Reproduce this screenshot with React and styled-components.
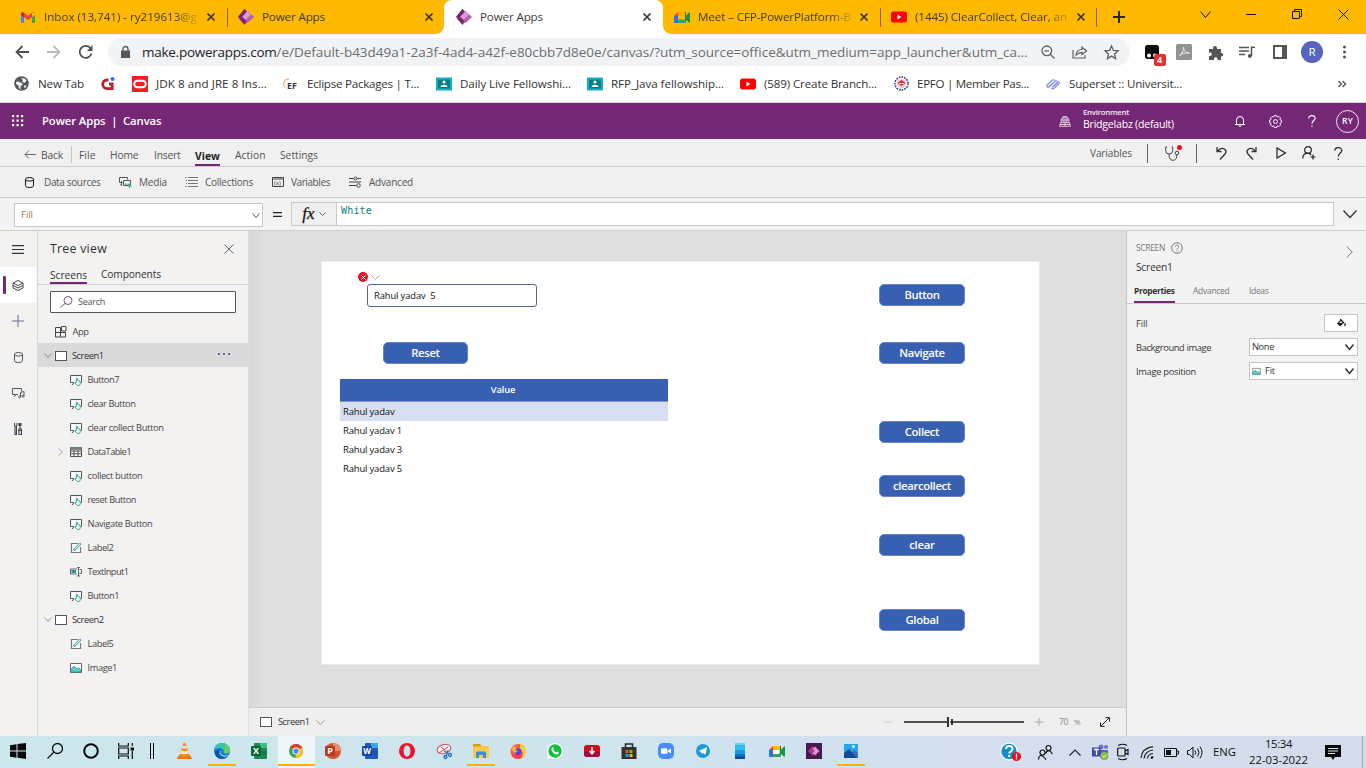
import React, { useLayoutEffect, useRef, useState } from "react";
import styled, { createGlobalStyle } from "styled-components";

const GlobalStyle = createGlobalStyle`
  * { box-sizing: border-box; }
  body { margin: 0; overflow: hidden; font-family: "Open Sans", "Noto Sans", sans-serif; }
  svg { display: block; flex: none; overflow: visible; }
`;

/* ---------- text ---------- */
const TextSpan = styled.span`
  display: inline-block;
  flex: none;
  white-space: pre;
  font-size: ${(p) => p.$size || 9.5}px;
  font-weight: ${(p) => p.$weight || 400};
  color: ${(p) => p.$color || "#333"};
  line-height: ${(p) => p.$lh || 14}px;
`;

/* Tracks its letters so that the label takes exactly `w` pixels. */
function Text({ w, size, weight, color, lh, children }) {
  const ref = useRef(null);
  const [spacing, setSpacing] = useState(0);
  useLayoutEffect(() => {
    if (!w) return;
    const natural = ref.current.getBoundingClientRect().width;
    setSpacing((w - natural) / ref.current.textContent.length);
  }, [w]);
  return (
    <TextSpan ref={ref} $size={size} $weight={weight} $color={color} $lh={lh} style={{ letterSpacing: spacing }}>
      {children}
    </TextSpan>
  );
}

/* ---------- icons ---------- */
function Icon({ s = 16, w, h, vb, c = "#333", sw = 1, children }) {
  return (
    <svg width={w || s} height={h || s} viewBox={vb || `0 0 ${w || s} ${h || s}`} fill="none" stroke={c} strokeWidth={sw}>
      {children}
    </svg>
  );
}
const GmailIcon = () => (
  <Icon w={14} h={11} c="none">
    <path d="M0 2h3v9H1a1 1 0 0 1-1-1z" fill="#4285f4" />
    <path d="M11 2h3v8a1 1 0 0 1-1 1h-2z" fill="#34a853" />
    <path d="M0 1.500C0 0 1.500-.3 3 .8l4 3 4-3C12.500-.3 14 0 14 1.500V3l-7 5-7-5z" fill="#ea4335" />
    <path d="M0 1.500C0 .3 1.500 0 3 1v4L0 3z" fill="#c5221f" />
    <path d="M14 1.500C14 .3 12.500 0 11 1v4l3-2z" fill="#fbbc04" />
  </Icon>
);
const PowerIcon = () => (
  <Icon s={16} c="none">
    <path d="M6.500 0L0 8l6.500 8L13 8z" fill="#8c2f88" />
    <path d="M6.500 0L0 8h5l5-4z" fill="#742774" />
    <path d="M9.500 2l6.500 6-6.500 6-3.500-6z" fill="#b560ae" />
    <path d="M9.500 2L13 5.500 7.500 11 4 8z" fill="#dc9ad3" />
    <path d="M4 8l3.500 3-2 3.500L1 9.500z" fill="#742774" />
  </Icon>
);
const MeetIcon = ({ pale }) => (
  <Icon s={16} c="none">
    <path d="M0 7l4-4v4z" fill="#ea4335" />
    <path d="M4 3h7v4H4z" fill={pale ? "#fbbc04" : "#f9ab00"} />
    <path d="M0 7h4v7H1a1 1 0 0 1-1-1z" fill="#2874f0" />
    <path d="M4 10.500h8V13a1 1 0 0 1-1 1H4z" fill="#34a853" />
    <path d="M11 3h1v10l-1-2z" fill="#188038" />
    <path d="M11 8l4-4.500h1v10h-1l-4-3.500z" fill="#159447" />
    {pale && <path d="M4 7h6v4H4z" fill="#fff" />}
  </Icon>
);
const YoutubeIcon = () => (
  <Icon w={16} h={12} c="none">
    <rect y=".5" width="16" height="11" rx="2.500" fill="#f00" />
    <path d="M6.500 3.500l4 2.500-4 2.500z" fill="#fff" />
  </Icon>
);
const Cross = ({ s = 8, c = "#333", sw = 1.700 }) => (
  <Icon s={s} c={c} sw={sw}><path d={`M.5 .5L${s - 0.5} ${s - 0.5}M${s - 0.5} .5L.5 ${s - 0.5}`} /></Icon>
);
const Chevron = ({ w = 9, h = 5, c = "#555", sw = 1 }) => (
  <Icon w={w} h={h} c={c} sw={sw}><path d={`M.5 .5L${w / 2} ${h - 0.5}L${w - 0.5} .5`} /></Icon>
);
const ClassroomIcon = () => (
  <Icon s={16} c="none">
    <path d="M0 1.500h16v13H0z" fill="#12b1c2" />
    <path d="M2 3.500h12v9H2z" fill="#057d87" />
    <circle cx="8" cy="6" r="1.600" fill="#fff" />
    <path d="M4.500 11c0-3 7-3 7 0z" fill="#fff" />
  </Icon>
);
const ScreenIcon = () => (
  <Icon w={12} h={10} c="#555"><rect x=".5" y=".5" width="11" height="9" fill="#fff" /></Icon>
);
const ButtonIcon = () => (
  <Icon s={12} c="#555">
    <path d="M4 8.500H.5v-7h11v7H10" fill="#fbfbfb" />
    <path d="M2 11.300l2-2.500" />
    <path d="M6.300 8.500V4.500q.7-.8 1.400 0v2.300l2 .5q.9.4.6 1.800l-.5 2q-1.500.8-3 0L5 9q.3-.8 1.300-.4z" stroke="#1b9a9a" strokeWidth=".9" fill="#f4fbfa" />
  </Icon>
);
const TableIcon = () => (
  <Icon s={12} c="#555">
    <path d="M.5 1.500h11v9H.5zM.5 5h11M.5 7.700h11M4 4v6.500M8 4v6.500" />
    <path d="M0 1h12v2.800H0z" fill="#777" stroke="none" />
  </Icon>
);
const LabelIcon = () => (
  <Icon s={12} c="#777" sw={1.200}>
    <path d="M10.500 5v5.500h-9v-9H8" fill="#fafafa" />
    <path d="M3.800 8.500l.5-2L9.800 1l1.300 1.200-5.500 5.700z" stroke="#1b9a9a" strokeWidth=".9" fill="#dff1f0" />
  </Icon>
);
const InputIcon = () => (
  <Icon s={12} c="#666">
    <path d="M7 3H.5v5H7" /><path d="M1.500 4h4.500v3H1.500z" fill="#1b9a9a" stroke="none" />
    <path d="M7 1.500h1.500v8.500H7M10 1.500H8.500M10 10H8.500M9.500 3.500h2v4h-2" />
  </Icon>
);
const ImageIcon = ({ w = 12, h = 10 }) => (
  <Icon w={w} h={h} vb="0 0 12 10" c="none">
    <path d="M.5.500h11v9H.5z" fill="#fff" stroke="#666" />
    <path d="M1 6l3-3 3 3 1.500-1.500L11 7v2H1z" fill="#5cc9c7" stroke="#1b9a9a" strokeWidth=".7" />
  </Icon>
);
const AppIcon = () => (
  <Icon s={12} c="#444"><path d="M.5 1.500h5v9.500h-5zM.5 6.500h10v4.500h-5M5.500 6.500h5v4.500M6.500.5h4.500v4.500h-4.500z" /></Icon>
);
const CylinderIcon = ({ c = "#222" }) => (
  <Icon w={9} h={11} c={c}>
    <ellipse cx="4.500" cy="2.300" rx="4" ry="1.800" /><path d="M.5 2.300v6.400c0 2.400 8 2.400 8 0V2.300" />
  </Icon>
);
const MediaIcon = ({ c = "#555" }) => (
  <Icon s={13} c={c}>
    <path d="M2.500 6.500H.5v-5h8v2M1.500 9l2-2.500" /><path d="M4.500 4.500h7v5h-7zM2.500 5v5" />
    <path d="M5 9l2-2 1.500 1.500L10 7l1.500 2z" fill="#5cc9c7" stroke="none" /><path d="M10.500 8v4M8.500 10h4" stroke="#47a866" />
  </Icon>
);
const RailMedia = () => (
  <Icon w={13} h={12} c="#555">
    <path d="M6 7.500H.5v-6h9v3M2 10l2-2.500" /><path d="M8.500 9.500v-4l3.500-1v4.500" /><circle cx="7.600" cy="9.800" r="1" /><circle cx="11" cy="9.200" r="1" />
  </Icon>
);
const QuestionIcon = ({ c = "#fff", s = 12 }) => (
  <Icon w={s * 0.66} h={s} vb="0 0 8 12" c={c} sw={1.100}>
    <path d="M.7 3.500C.7-.4 7.300-.4 7.300 3.300 7.300 5.500 4 5.700 4 8.800" /><path d="M4 10.600V12" />
  </Icon>
);
const GearIcon = () => (
  <Icon s={13} c="#fff">
    {[0, 45, 90, 135, 180, 225, 270, 315].map((a) => <path key={a} d="M4.800 2.100l.5-1.600h2.400l.5 1.600" transform={`rotate(${a} 6.500 6.500)`} strokeWidth=".9" />)}
    <circle cx="6.500" cy="6.500" r="1.900" />
  </Icon>
);
const Letter = ({ ch, bg, dark, light }) => (
  <Icon s={16} c="none">
    {ch === "P" ? <><circle cx="8" cy="8" r="8" fill={bg} /><path d="M8 0a8 8 0 0 1 8 8H8z" fill={light} /></> : <>
      <rect x="3" width="13" height="16" rx="1" fill={bg} /><path d="M9 0h6a1 1 0 0 1 1 1v4H9z" fill={light} /><path d="M3 8h13v3.500H3z" fill={dark} opacity=".45" /></>}
    <rect y="3" width="10" height="10" rx="1" fill={dark} />
    <text x="5" y="11.200" textAnchor="middle" fontSize={ch === "W" ? 8 : 9} fontWeight="700" fontFamily="Open Sans" fill="#fff">{ch}</text>
  </Icon>
);

/* ---------- shared layout ---------- */
const Page = styled.div`
  width: 1366px; height: 768px; display: flex; flex-direction: column; background: #fff; overflow: hidden;
`;
const Row = styled.div`
  display: flex; align-items: center; flex: none;
  height: ${(p) => p.$h}px;
  gap: ${(p) => p.$gap || 0}px;
`;
const Cell = styled.div`
  display: flex; align-items: center; flex: none; height: 100%;
  width: ${(p) => p.$w}px;
  justify-content: ${(p) => (p.$center ? "center" : "flex-start")};
`;
const Spacer = styled.div`flex: 1;`;

/* ---------- browser chrome ---------- */
const TabStrip = styled.div`
  display: flex; height: 34px; flex: none; background: #ffb900;
`;
const Tab = styled.div`
  display: flex; align-items: center; position: relative; flex: none; height: 34px;
  width: ${(p) => p.$w}px;
  padding: 0 ${(p) => p.$pr}px 0 ${(p) => p.$pl}px;
  justify-content: space-between;
  background: ${(p) => (p.$active ? "#fff" : "transparent")};
  border-radius: 8px 8px 0 0;
  ${(p) => p.$sep && `&::after { content: ""; position: absolute; right: 0; top: 8px; width: 1px; height: 19px; background: #85662a; }`}
  ${(p) => p.$active && `
    &::before, &::after { content: ""; position: absolute; bottom: 0; width: 8px; height: 8px; }
    &::before { left: -8px; background: radial-gradient(circle at 0 0, #ffb900 7.500px, #fff 8px); }
    &::after { right: -8px; background: radial-gradient(circle at 100% 0, #ffb900 7.500px, #fff 8px); }
  `}
`;
const TabTitle = styled.div`
  display: flex; align-items: center; gap: 8px;
`;
const Faded = styled.div`
  width: 154px; flex: none; display: flex;
  mask-image: ${(p) => (p.$fade ? "linear-gradient(90deg, #000 132px, rgba(0,0,0,.15))" : "none")};
`;
const WindowButtons = styled.div`
  display: flex; align-items: center; height: 28px;
`;
const AddressRow = styled.div`
  display: flex; height: 32px; padding-top: 4px; flex: none; align-items: center; background: #fff;
`;
const AddressPill = styled.div`
  display: flex; align-items: center; width: 1022px; height: 28px; border-radius: 14px; background: #f1f3f4; flex: none; padding-left: 13px;
`;
const Bookmarks = styled.div`
  display: flex; align-items: center; height: 37px; flex: none; padding: 0 0 1px 14px; border-bottom: 1px solid #d3d3d6;
`;
const Avatar = styled.div`
  width: 22px; height: 22px; border-radius: 50%; background: #5565bd; display: flex; align-items: center; justify-content: center;
`;
const ExtensionBadge = styled.div`
  position: absolute; left: 9px; top: 9px; width: 12px; height: 12px; border-radius: 2px; background: #e8302f;
  display: flex; align-items: center; justify-content: center;
`;
const BadgeHost = styled.div`position: relative;`;

function BrowserTab({ w, pl, pr, active, sep, icon, title, tw, fade }) {
  return (
    <Tab $w={w} $pl={pl} $pr={pr} $active={active} $sep={sep}>
      <TabTitle>
        {icon}
        <Faded $fade={fade}><Text size={11.600} w={tw} color="#3b3a37" lh={18}>{title}</Text></Faded>
      </TabTitle>
      <Cross />
    </Tab>
  );
}

function BrowserTop() {
  return (
    <>
      <TabStrip>
        <BrowserTab w={228} pl={21} pr={13} sep fade icon={<Cell $w={15}><GmailIcon /></Cell>} title="Inbox (13,741) - ry219613@g" tw={153} />
        <BrowserTab w={216} pl={10} pr={11} icon={<PowerIcon />} title="Power Apps" tw={63} />
        <BrowserTab w={219} pl={12} pr={12} active icon={<PowerIcon />} title="Power Apps" tw={63} />
        <BrowserTab w={218} pl={11} pr={13} sep fade icon={<MeetIcon />} title="Meet – CFP-PowerPlatform-B" tw={153} />
        <BrowserTab w={216} pl={10} pr={12} sep fade icon={<YoutubeIcon />} title="(1445) ClearCollect, Clear, an" tw={152} />
        <Cell $w={43} $center><Icon s={12} c="#2c2716" sw={2}><path d="M6 0v12M0 6h12" /></Icon></Cell>
        <Spacer />
        <WindowButtons>
          <Cell $w={46} $center><Chevron w={11} h={7} c="#111" /></Cell>
          <Cell $w={46} $center><Icon w={10} h={1} c="#111"><path d="M0 .5h10" /></Icon></Cell>
          <Cell $w={46} $center><Icon s={10} c="#111"><path d="M.5 2.500h7v7h-7zM2.500 2.500v-2h7v7h-2" /></Icon></Cell>
          <Cell $w={46} $center><Cross s={11} c="#111" sw={1} /></Cell>
        </WindowButtons>
      </TabStrip>
      <AddressRow>
        <Cell $w={6} />
        <Cell $w={32} $center><Icon s={14} c="#4e5154" sw={1.800}><path d="M14 7H1.500M7.500 1l-6 6 6 6" /></Icon></Cell>
        <Cell $w={32} $center><Icon s={14} c="#b9babc" sw={1.800}><path d="M0 7h12.500M6.500 1l6 6-6 6" /></Icon></Cell>
        <Cell $w={32} $center><Icon s={14} c="#4e5154" sw={1.800}><path d="M12.500 8.500A6 6 0 1 1 11.300 3" /><path d="M13.500 0v6H8z" fill="#4e5154" stroke="none" /></Icon></Cell>
        <Cell $w={6} />
        <AddressPill>
          <Cell $w={21}>
            <Icon w={9} h={12} c="none"><path d="M0 4.500h9V12H0z" fill="#55585c" /><path d="M2 5V3a2.500 2.500 0 0 1 5 0v2" stroke="#55585c" strokeWidth="1.300" /></Icon>
          </Cell>
          <Text size={13.500} w={134.500} color="#222428" lh={20}>make.powerapps.com</Text>
          <Text size={13.500} w={751} color="#6b6e72" lh={20}>/e/Default-b43d49a1-2a3f-4ad4-a42f-e80cbb7d8e0e/canvas/?utm_source=office&utm_medium=app_launcher&utm_ca...</Text>
          <Spacer />
          <Cell $w={32} $center><Icon s={14} c="#5c5f63" sw={1.300}><circle cx="5.800" cy="5.800" r="4.800" /><path d="M9.300 9.300l4.200 4.200M3.500 5.800H8" /></Icon></Cell>
          <Cell $w={32} $center><Icon w={16} h={14} c="#5c5f63" sw={1.200}><path d="M1 5v8h12v-3M4 10c.5-4 3-5.500 6-5.500V2l4.500 4L10 9.500V7.300C7.500 7.300 6 8 4 10z" /></Icon></Cell>
          <Cell $w={31} $center><Icon s={15} c="#5c5f63" sw={1.300}><path d="M7.500 1l1.900 4.400 4.700.4-3.600 3.100 1.100 4.700-4.100-2.500-4.100 2.500 1.100-4.700L.9 5.800l4.700-.4z" /></Icon></Cell>
          <Cell $w={3} />
        </AddressPill>
        <Cell $w={5} />
        <Cell $w={33} $center>
          <BadgeHost>
            <Icon s={14} c="none"><rect width="14" height="14" rx="2.500" fill="#0c0c0c" /><circle cx="4" cy="10.500" r="2" fill="#fff" /><circle cx="10" cy="10.500" r="2" fill="#fff" /></Icon>
            <ExtensionBadge><Text size={9} weight={700} color="#fff" lh={12}>4</Text></ExtensionBadge>
          </BadgeHost>
        </Cell>
        <Cell $w={32} $center><Icon s={16} c="none"><rect width="16" height="16" rx="1.500" fill="#939393" /><path d="M3 12c3-2 5-6 4.500-9 .3 4 3 6 6 6-4-.5-8 .5-10.500 3z" stroke="#eee" /></Icon></Cell>
        <Cell $w={31} $center><Icon s={15} c="none"><path d="M1 4h4V3a2 2 0 0 1 4 0v1h4v4h.5a1.800 1.800 0 0 1 0 3.600H13V15H9.500v-1a1.800 1.800 0 0 0-3.600 0v1H1v-4h1a1.800 1.800 0 0 0 0-3.600H1z" fill="#54575a" /></Icon></Cell>
        <Cell $w={32} $center><Icon w={16} h={13} c="#54575a" sw={1.600}><path d="M0 1.500h10M0 5h10M0 8.500h6M12.500 10V1.300H16" /><circle cx="10.800" cy="10" r="1.900" fill="#54575a" stroke="none" /></Icon></Cell>
        <Cell $w={33} $center><Icon s={14} c="#54575a" sw={2}><rect x="1" y="1" width="12" height="12" /><path d="M11 1v12" strokeWidth="4" /></Icon></Cell>
        <Cell $w={32} $center><Avatar><Text size={11.500} color="#fff">R</Text></Avatar></Cell>
        <Cell $w={33} $center><Icon w={3} h={14} c="none"><circle cx="1.500" cy="2" r="1.500" fill="#54575a" /><circle cx="1.500" cy="7" r="1.500" fill="#54575a" /><circle cx="1.500" cy="12" r="1.500" fill="#54575a" /></Icon></Cell>
      </AddressRow>
      <Bookmarks>
        <Cell $w={24}><Icon s={15} c="none"><circle cx="7.500" cy="7.500" r="7.300" fill="#55595d" /><path d="M2 6q2.500-1 4 .5 3 0 2.500 2.500L6.500 10v3.500Q4 12 4.500 9.500L2 8zM7 2.500q4-1 5.500 2L10.500 7 8 5.500l1-1.500zM10 9.500l3 .2-2.500 2.800z" fill="#f5f5f5" /></Icon></Cell>
        <Cell $w={63}><Text size={11.600} w={46}>New Tab</Text></Cell>
        <Cell $w={31}><Icon s={14} c="#bd2028" sw={2.800}><path d="M7.500 3H6a4.300 4.300 0 1 0 0 8.600h5.200V7H8" /><circle cx="11.500" cy="2" r="2.100" fill="#2e6df6" stroke="none" /></Icon></Cell>
        <Cell $w={24}><Icon s={16} c="none"><path d="M0 0h16v16H0z" fill="#ee1f27" /><rect x="2.200" y="4.700" width="11.600" height="6.600" rx="3.300" stroke="#fff" strokeWidth="2" /></Icon></Cell>
        <Cell $w={127}><Text size={11.600} w={111}>JDK 8 and JRE 8 Ins...</Text></Cell>
        <Cell $w={24}><Icon w={16} h={14} c="#f0953c" sw={1}><path d="M6 2C0 2-.5 8 2.500 10.500" /><text x="4" y="12" fontSize="9" fontWeight="700" fontFamily="Open Sans" fill="#3a3540" stroke="none">EF</text></Icon></Cell>
        <Cell $w={129}><Text size={11.600} w={112}>Eclipse Packages | T...</Text></Cell>
        <Cell $w={24}><ClassroomIcon /></Cell>
        <Cell $w={127}><Text size={11.600} w={111}>Daily Live Fellowshi...</Text></Cell>
        <Cell $w={24}><ClassroomIcon /></Cell>
        <Cell $w={129}><Text size={11.600} w={113}>RFP_Java fellowship...</Text></Cell>
        <Cell $w={24}><YoutubeIcon /></Cell>
        <Cell $w={130}><Text size={11.600} w={113}>(589) Create Branch...</Text></Cell>
        <Cell $w={23}><Icon s={15} c="none"><circle cx="7.500" cy="7.500" r="6.500" stroke="#273c87" strokeWidth="1.500" strokeDasharray="1.700 1" /><circle cx="7.500" cy="7.500" r="4.500" fill="#f3c5ca" /><path d="M3.500 7l4-3 4 3-4 3z" fill="#e0293a" /><path d="M5 7.500h5" stroke="#fff" /></Icon></Cell>
        <Cell $w={129}><Text size={11.600} w={112}>EPFO | Member Pas...</Text></Cell>
        <Cell $w={23}><Icon s={14} c="#7a86e6" sw={1.100}><path d="M1 8l5.500-5q1.500-.8 2.500.5M1 8q-.5 2 1.500 2.500L8 5.500M3 9.500L9.500 4q2-.5 2 1.500L6 10.500M5 11q1 1.500 3 .5L13 7q1-2-1-2.500M7.500 9.500l4-3.500" /></Icon></Cell>
        <Cell $w={168}><Text size={11.600} w={113}>Superset :: Universit...</Text></Cell>
        <Spacer />
        <Cell $w={28}><Icon s={8} c="#555" sw={1.400}><path d="M.5 1L3.500 4l-3 3M4.500 1l3 3-3 3" /></Icon></Cell>
      </Bookmarks>
    </>
  );
}

/* ---------- Power Apps header ---------- */
const SuiteHeader = styled.header`
  display: flex; align-items: center; height: 36px; flex: none; background: #742774; padding-left: 12px;
`;
const Stack = styled.div`
  display: flex; flex-direction: column; align-items: flex-start; width: ${(p) => p.$w}px; flex: none;
  padding-bottom: ${(p) => p.$pb || 0}px;
`;
const Persona = styled.div`
  width: 23px; height: 23px; flex: none; border: 1px solid #f2e8f2; border-radius: 50%; display: flex; align-items: center; justify-content: center;
`;
const MenuBar = styled.nav`
  display: flex; height: 28px; flex: none; background: #f0f0f0; border-bottom: 1px solid #cfcfcf; padding: 4px 0 0 24px;
`;
const Underlined = styled.div`
  display: flex; align-items: center; height: ${(p) => p.$h}px; border-bottom: 2px solid #742774; flex: none;
`;
const ViewTab = styled(Underlined)`
  padding-top: 4px;
`;
const VRule = styled.div`
  width: 1px; height: ${(p) => p.$h}px; background: ${(p) => p.$c || "#666"}; flex: none;
`;
const Ribbon = styled.div`
  display: flex; height: 31px; flex: none; background: #f0f0f0; border-bottom: 1px solid #cfcfcf; padding-left: 25px;
`;
const FormulaBar = styled.div`
  display: flex; height: 33px; flex: none; background: #f3f3f3; border-bottom: 1px solid #cfcfcf; padding: 4px 0 4px 14px;
`;
const PropertyBox = styled.div`
  display: flex; align-items: center; justify-content: space-between; width: 249px; height: 24px; margin-top: 1px; background: #fff;
  border: 1px solid #c8c8c8; padding: 0 2px 0 6px;
`;
const FxBox = styled.div`
  display: flex; align-items: center; justify-content: center; gap: 4px; width: 45px; height: 24px; border: 1px solid #c8c8c8; background: #f0f0f0; border-right: 0;
`;
const Fx = styled.span`
  font: italic 400 17px/20px "Liberation Serif", serif; color: #111; -webkit-text-stroke: .25px #111;
`;
const Code = styled.span`
  font: 10px/14px "DejaVu Sans Mono", monospace; color: #0c7f7f; letter-spacing: .18px;
`;
const FormulaInput = styled.div`
  flex: none; width: 998px; height: 24px; border: 1px solid #c8c8c8; background: #fff; padding: 1px 4px; display: flex; align-items: flex-start;
`;
const StatusDot = styled.div`
  position: absolute; right: -2px; top: -1px; width: 5px; height: 5px; border-radius: 50%; background: #ee1020;
`;

function AppHeader() {
  return (
    <>
      <SuiteHeader>
        <Cell $w={30}><Icon s={12} c="none">{[0, 4.500, 9].map((y) => [0, 4.500, 9].map((x) => <rect key={`${x}-${y}`} x={x} y={y} width="2.200" height="2.200" fill="#fff" />))}</Icon></Cell>
        <Text size={11.300} weight={600} w={119.500} color="#fff" lh={20}>Power Apps  |  Canvas</Text>
        <Spacer />
        <Cell $w={24}><Icon s={12} c="#f3e8f3"><path d="M2.500 7.500a4 4 0 1 1 7 0M6 1v10M2 5h8M4.300 1.500q-1 3 0 6M7.700 1.500q1 3 0 6M1.500 7.700L.5 11.300h11L10.500 7.700zM1 9.500h10" strokeWidth=".8" /></Icon></Cell>
        <Stack $w={148} $pb={4}>
          <Text size={7.800} w={46} weight={600} color="#f4e9f4" lh={10}>Environment</Text>
          <Text size={10.600} w={91} weight={500} color="#fff" lh={14}>Bridgelabz (default)</Text>
        </Stack>
        <Cell $w={17} $center><Icon s={12} c="#fff"><path d="M1 9.500h10M2.500 9.500V5a3.500 3.500 0 0 1 7 0v4.500M4.800 10c0 2 2.400 2 2.400 0" /></Icon></Cell>
        <Cell $w={19} />
        <Cell $w={17} $center><GearIcon /></Cell>
        <Cell $w={19} />
        <Cell $w={17} $center><QuestionIcon /></Cell>
        <Cell $w={16} />
        <Cell $w={30}><Persona><Text size={8.500} w={11} weight={600} color="#fff" lh={12}>RY</Text></Persona></Cell>
      </SuiteHeader>
      <MenuBar>
        <Cell $w={17}><Icon w={12} h={9} c="#666"><path d="M12 4.500H1M5 .5l-4 4 4 4" /></Icon></Cell>
        <Cell $w={30}><Text size={10.300} w={22} color="#555">Back</Text></Cell>
        <Cell $w={8}><VRule $h={17} $c="#c4c4c4" /></Cell>
        <Cell $w={31}><Text size={10.300} w={16.500} color="#555">File</Text></Cell>
        <Cell $w={44}><Text size={10.300} w={28.500} color="#555">Home</Text></Cell>
        <Cell $w={41}><Text size={10.300} w={26.500} color="#555">Insert</Text></Cell>
        <Cell $w={40}><ViewTab $h={23}><Text size={10.300} w={25} weight={700} color="#222">View</Text></ViewTab></Cell>
        <Cell $w={45}><Text size={10.300} w={30.500} color="#555">Action</Text></Cell>
        <Cell $w={45}><Text size={10.300} w={38} color="#555">Settings</Text></Cell>
        <Spacer />
        <Row $h={20}>
          <Cell $w={57}><Text size={10} w={42} color="#555" lh={16}>Variables</Text></Cell>
          <VRule $h={19} />
          <Cell $w={48} $center>
            <BadgeHost><Icon w={15} h={15} c="#444"><path d="M2 1H.7v3.500a3.500 3.500 0 0 0 7 0V1H6.500M4.200 8v2.500c0 5 7.500 5 7.500 0V9" /><circle cx="12" cy="7" r="1.800" /></Icon><StatusDot /></BadgeHost>
          </Cell>
          <VRule $h={19} />
          <Cell $w={10} />
          <Cell $w={29} $center><Icon w={11} h={13} c="#333" sw={1.300}><path d="M1 0v4.500h4.500M1 4.500Q5.500-.5 9 2.500q2 2 0 4.500l-5 5.500" /></Icon></Cell>
          <Cell $w={30} $center><Icon w={11} h={13} c="#333" sw={1.300}><path d="M10 0v4.500H5.500M10 4.500Q5.500-.5 2 2.500q-2 2 0 4.500l5 5.500" /></Icon></Cell>
          <Cell $w={29} $center><Icon w={10} h={12} c="#222" sw={1.200}><path d="M1 1l8.500 5L1 11z" /></Icon></Cell>
          <Cell $w={28} $center><Icon s={14} c="#222" sw={1.200}><circle cx="6" cy="4" r="3.300" /><path d="M.7 12.500q.3-5 4.500-5.300 3 0 4 2M11 8.500v5M8.500 11h5" /></Icon></Cell>
          <Cell $w={30} $center><QuestionIcon c="#222" s={13} /></Cell>
          <Cell $w={13} />
        </Row>
      </MenuBar>
      <Ribbon>
        <Cell $w={19}><CylinderIcon c="#111" /></Cell>
        <Cell $w={75}><Text size={10} w={56.500} color="#555">Data sources</Text></Cell>
        <Cell $w={20}><MediaIcon /></Cell>
        <Cell $w={46}><Text size={10} w={28} color="#555">Media</Text></Cell>
        <Cell $w={20}><Icon w={13} h={10} c="#777"><path d="M3 .5h10M3 3.500h10M3 6.500h10M3 9.500h10M0 .5h1.500M1 3.500h1M1 6.500h1M0 9.500h1.500" /></Icon></Cell>
        <Cell $w={67}><Text size={10} w={48} color="#555">Collections</Text></Cell>
        <Cell $w={19}><Icon w={12} h={10} c="#444"><path d="M.5.500h11v9H.5zM.5 2h11" /><text x="2" y="8" fontSize="6" fontFamily="Open Sans" fill="#333" stroke="none">(x)</text></Icon></Cell>
        <Cell $w={58}><Text size={10} w={39} color="#555">Variables</Text></Cell>
        <Cell $w={20}><Icon s={12} c="#444"><path d="M0 2.500h5M8 2.500h4M0 6h12M0 9.500h7" /><circle cx="6.500" cy="2.500" r="1.500" /><circle cx="9.500" cy="9.500" r="1.800" /></Icon></Cell>
        <Text size={10} w={44} color="#555" lh={30}>Advanced</Text>
      </Ribbon>
      <FormulaBar>
        <PropertyBox><Text size={9.500} w={12} color="#9a7a4c">Fill</Text><Chevron w={8} h={5} /></PropertyBox>
        <Cell $w={28} $center><Icon w={9} h={5} c="#222" sw={1.200}><path d="M0 .6h9M0 4.400h9" /></Icon></Cell>
        <FxBox><Fx>fx</Fx><Chevron w={7} h={4} c="#666" /></FxBox>
        <FormulaInput><Code>White</Code></FormulaInput>
        <Cell $w={32} $center><Chevron w={14} h={8} c="#333" sw={1.300} /></Cell>
      </FormulaBar>
    </>
  );
}

/* ---------- left side ---------- */
const Workspace = styled.main`display: flex; flex: 1; min-height: 0;`;
const Rail = styled.aside`
  width: 38px; flex: none; background: #f3f2f1; border-right: 1px solid #dcdcdc; display: flex; flex-direction: column;
`;
const RailItem = styled.div`
  display: flex; align-items: center; justify-content: center; height: 36px; width: 36px; flex: none; position: relative;
  background: ${(p) => (p.$active ? "#fff" : "transparent")};
  ${(p) => p.$active && `&::before { content: ""; position: absolute; left: 3px; top: 9px; width: 3px; height: 18px; border-radius: 1px; background: #742774; }`}
`;
const TreePanel = styled.aside`
  width: 211px; flex: none; background: #f3f2f1; border-right: 1px solid #dedede; display: flex; flex-direction: column;
`;
const TreeHead = styled.div`
  display: flex; align-items: center; justify-content: space-between; height: 36px; padding: 0 14px 0 12px; flex: none;
`;
const TreeTabs = styled.div`
  display: flex; align-items: flex-start; gap: 14px; height: 18px; padding-left: 12px; border-bottom: 1px solid #d0d0d0; flex: none;
`;
const SearchBox = styled.div`
  display: flex; align-items: center; gap: 5px; width: 186px; height: 22px; margin: 6px 0 6px 12px; padding-left: 9px;
  border: 1px solid #555; border-radius: 1px; background: #fff; flex: none;
`;
const TreeRow = styled.div`
  display: flex; align-items: center; height: 24px; flex: none;
  padding: 1px 18px 0 ${(p) => p.$indent}px;
  background: ${(p) => (p.$active ? "#dadada" : "transparent")};
`;
const Dots = styled.div`
  display: flex; gap: 3px; margin-left: auto; padding-bottom: 3px;
  i { width: 2px; height: 2px; background: #5a6f96; }
`;

const treeItems = [
  [ButtonIcon, "Button7", 31.500], [ButtonIcon, "clear Button", 48], [ButtonIcon, "clear collect Button", 76],
  [TableIcon, "DataTable1", 43.500, true], [ButtonIcon, "collect button", 55], [ButtonIcon, "reset Button", 48.500],
  [ButtonIcon, "Navigate Button", 65], [LabelIcon, "Label2", 26], [InputIcon, "TextInput1", 41], [ButtonIcon, "Button1", 31.500],
];

function TreeItem({ icon: ItemIcon, name, w, expandable }) {
  return (
    <TreeRow $indent={20}>
      <Cell $w={12}>{expandable && <Icon w={5} h={8} c="#aaa"><path d="M.5.500L4.500 4l-4 3.500" /></Icon>}</Cell>
      <Cell $w={17.500}><ItemIcon /></Cell>
      <Text size={9.300} w={w} color="#484644">{name}</Text>
    </TreeRow>
  );
}

function LeftSide() {
  return (
    <>
      <Rail>
        <RailItem><Icon w={12} h={9} c="#333" sw={1.200}><path d="M0 .7h12M0 4.500h12M0 8.300h12" /></Icon></RailItem>
        <RailItem $active><Icon w={12} h={11} c="#444"><path d="M6 .5L11 3 6 5.500 1 3zM1 5.500L6 8l5-2.500M1 3v5l5 2.500L11 8V3" /></Icon></RailItem>
        <RailItem><Icon s={12} c="#6b6b93"><path d="M6 0v12M0 6h12" /></Icon></RailItem>
        <RailItem><CylinderIcon c="#555" /></RailItem>
        <RailItem><RailMedia /></RailItem>
        <RailItem><Icon w={8} h={12} c="#444" sw={1.100}><path d="M.5 0v2.500q1.200 1.500 2.500 0V0M1 3.500v8h1.500v-8M6 .5v5M5 6h2.500v5.500H5zM5 .5h2v2H5zM4 7.500h3" /></Icon></RailItem>
      </Rail>
      <TreePanel>
        <TreeHead><Text size={12.300} w={57} weight={500} lh={18}>Tree view</Text><Cross s={10} c="#666" sw={1} /></TreeHead>
        <TreeTabs>
          <Underlined $h={17}><Text size={10.200} w={37} lh={14}>Screens</Text></Underlined>
          <Text size={10.200} w={60} lh={14}>Components</Text>
        </TreeTabs>
        <SearchBox>
          <Icon w={13} h={12} c="#76507a"><circle cx="8" cy="4.500" r="4" /><path d="M5.200 7.300L.5 11.500" /></Icon>
          <Text size={9} w={27} color="#555" lh={16}>Search</Text>
        </SearchBox>
        <TreeRow $indent={17}><Cell $w={17.500}><AppIcon /></Cell><Text size={9.300} w={16} color="#484644">App</Text></TreeRow>
        <TreeRow $indent={6} $active>
          <Cell $w={11}><Chevron w={8} h={5} c="#888" /></Cell><Cell $w={17}><ScreenIcon /></Cell><Text size={9.300} w={31.500}>Screen1</Text>
          <Dots><i /><i /><i /></Dots>
        </TreeRow>
        {treeItems.map(([icon, name, w, expandable]) => <TreeItem key={name} icon={icon} name={name} w={w} expandable={expandable} />)}
        <TreeRow $indent={6}>
          <Cell $w={11}><Chevron w={8} h={5} c="#999" /></Cell><Cell $w={17}><ScreenIcon /></Cell><Text size={9.300} w={31.500}>Screen2</Text>
        </TreeRow>
        <TreeItem icon={LabelIcon} name="Label5" w={26} />
        <TreeItem icon={ImageIcon} name="Image1" w={29.500} />
      </TreePanel>
    </>
  );
}

/* ---------- design canvas ---------- */
const Center = styled.section`
  width: 877px; flex: none; display: flex; flex-direction: column;
`;
const Stage = styled.div`
  flex: 1; padding: 30px 0 0 72px; background: linear-gradient(90deg, #d9d9d9, #dfdfdf 18px); border-bottom: 1px solid #cccccc;
`;
const Artboard = styled.div`
  position: relative; width: 719px; height: 404px; background: #fff; border: 1px solid #ececec;
`;
const Placed = styled.div`
  position: absolute; left: ${(p) => p.$x}px; top: ${(p) => p.$y}px; display: flex; align-items: center; gap: 3px;
`;
const CanvasButton = styled.div`
  display: flex; align-items: center; justify-content: center; width: ${(p) => p.$w || 86}px; height: 22px;
  border-radius: 5px; background: #3860b2; border: 1px solid #6a83c4;
`;
const CanvasInput = styled.div`
  display: flex; align-items: center; width: 170px; height: 23px; padding: 1px 0 0 6px; border: 1px solid #56659f; border-radius: 3px; background: #fff;
`;
const ErrorDot = styled.div`
  width: 10px; height: 10px; border-radius: 50%; background: #e81123; display: flex; align-items: center; justify-content: center;
`;
const DataTable = styled.div`width: 328px; display: flex; flex-direction: column;`;
const DataHead = styled.div`
  height: 23px; background: #3860b2; border-bottom: 1px solid #8296c9; display: flex; align-items: center; justify-content: center; padding-right: 2px;
`;
const DataRow = styled.div`
  height: 19px; padding-left: 3px; display: flex; align-items: center; background: ${(p) => (p.$active ? "#d8dff0" : "#fff")};
`;
const StageFooter = styled.div`
  display: flex; align-items: center; height: 28px; background: #efefef; padding-left: 11px; flex: none;
`;

const canvasButtons = [
  ["Button", 22, 35], ["Navigate", 80, 45.500], ["Collect", 159, 34.500], ["clearcollect", 213, 58], ["clear", 272, 25.500], ["Global", 347, 33],
];
const dataRows = [["Rahul yadav", 51.500], ["Rahul yadav 1", 59], ["Rahul yadav 3", 59], ["Rahul yadav 5", 59]];

function CanvasArea() {
  return (
    <Center>
      <Stage>
        <Artboard>
          <Placed $x={36} $y={10}><ErrorDot><Cross s={5} c="#fff" sw={1} /></ErrorDot><Chevron w={9} h={5} c="#aaa" /></Placed>
          <Placed $x={45} $y={22}><CanvasInput><Text size={9.300} w={61.500} color="#111">Rahul yadav  5</Text></CanvasInput></Placed>
          <Placed $x={61} $y={80}><CanvasButton $w={85}><Text size={11.300} weight={600} w={28.500} color="#fff">Reset</Text></CanvasButton></Placed>
          <Placed $x={18} $y={117}>
            <DataTable>
              <DataHead><Text size={9.400} weight={600} w={24.500} color="#fff">Value</Text></DataHead>
              {dataRows.map(([name, w], i) => <DataRow key={name} $active={i === 0}><Text size={9.500} w={w} color="#111">{name}</Text></DataRow>)}
            </DataTable>
          </Placed>
          {canvasButtons.map(([name, y, w]) => (
            <Placed key={name} $x={557} $y={y}><CanvasButton><Text size={11.300} weight={600} w={w} color="#fff">{name}</Text></CanvasButton></Placed>
          ))}
        </Artboard>
      </Stage>
      <StageFooter>
        <Cell $w={18}><ScreenIcon /></Cell>
        <Cell $w={38}><Text size={9.300} w={31.500}>Screen1</Text></Cell>
        <Chevron w={9} h={5} c="#b29d72" />
        <Spacer />
        <Cell $w={20}><Icon w={8} h={2} c="none"><path d="M0 0h8v2H0z" fill="#dedede" /></Icon></Cell>
        <Cell $w={131}><Icon w={120} h={10} c="none"><path d="M0 4h120v2H0z" fill="#505050" /><path d="M43 0h2v10h-2zM47 2h2v6h-2z" fill="#333" /><path d="M45 3h1.200v4H45z" fill="#efefef" /></Icon></Cell>
        <Cell $w={24}><Icon s={8} c="#aaa"><path d="M4 0v8M0 4h8" /></Icon></Cell>
        <Cell $w={15}><Text size={8.500} w={9} color="#888">70</Text></Cell>
        <Cell $w={26}><Text size={8} w={6.500} color="#888">%</Text></Cell>
        <Cell $w={26}><Icon s={10} c="#222"><path d="M1 9l8-8M5.500.6h4v4M4.500 9.400h-4v-4" /></Icon></Cell>
      </StageFooter>
    </Center>
  );
}

/* ---------- properties ---------- */
const Properties = styled.aside`
  flex: 1; background: #f3f3f3; border-left: 1px solid #c4c4c4; display: flex; flex-direction: column;
`;
const PropsHead = styled.div`
  display: flex; justify-content: space-between; align-items: flex-start; padding: 8px 13px 0 9px; height: 52px; flex: none;
`;
const Collapse = styled.div`padding-top: 7px;`;
const PropsTabs = styled.div`
  display: flex; height: 21px; padding-left: 7px; border-bottom: 1px solid #c8c8c8; flex: none; align-items: flex-start;
`;
const TabSlot = styled.div`width: ${(p) => p.$w}px; flex: none; display: flex;`;
const PropTab = styled.div`
  display: flex; height: 20px; padding-top: 1px; border-bottom: 2px solid ${(p) => (p.$active ? "#742774" : "transparent")};
`;
const PropRow = styled.div`
  display: flex; align-items: center; justify-content: space-between; height: 24px; padding: 0 8px 0 9px; flex: none;
`;
const PropName = styled.div`padding-top: 2px; display: flex;`;
const PropsBody = styled.div`padding-top: 7px;`;
const Select = styled.div`
  display: flex; align-items: center; width: 109px; height: 18px; border: 1px solid #c4c4c4; background: #fff; padding: 0 3px 0 2px; gap: 4px;
`;
const ColorBox = styled.div`
  display: flex; align-items: center; justify-content: center; width: 34px; height: 18px; border: 1px solid #c4c4c4; background: #fff;
`;
const SelectChevron = styled.div`margin-left: auto;`;

function PropertiesPane() {
  return (
    <Properties>
      <PropsHead>
        <Stack $w={60}>
          <Row $h={18} $gap={6}><Text size={8.500} w={29} color="#777" lh={16}>SCREEN</Text>
            <Icon s={12} c="#777"><circle cx="6" cy="6" r="5.300" /><path d="M4.300 4.800c0-2.300 3.400-2.300 3.400 0C7.700 6 6 6 6 7.500M6 8.500v1" /></Icon>
          </Row>
          <Row $h={20}><Text size={10.300} w={36.500}>Screen1</Text></Row>
        </Stack>
        <Collapse><Icon w={7} h={12} c="#777"><path d="M.7.500L6.300 6 .7 11.500" /></Icon></Collapse>
      </PropsHead>
      <PropsTabs>
        <TabSlot $w={59}><PropTab $active><Text size={8.500} weight={700} w={40.500} lh={14}>Properties</Text></PropTab></TabSlot>
        <TabSlot $w={56}><PropTab><Text size={8.500} w={36.500} color="#777">Advanced</Text></PropTab></TabSlot>
        <PropTab><Text size={8.500} w={19.500} color="#777">Ideas</Text></PropTab>
      </PropsTabs>
      <PropsBody>
        <PropRow><PropName><Text w={11.500} size={9.300}>Fill</Text></PropName>
          <ColorBox><Icon s={9} c="none"><path d="M4 0L0 4.500l3 3 4.500-4z" fill="#222" /><path d="M3.500 0v3" stroke="#222" /><path d="M8 4.500c2 3-2 3 0 0z" stroke="#222" /><path d="M1.700 4h4L4 2z" fill="#fff" /></Icon></ColorBox>
        </PropRow>
        <PropRow><PropName><Text w={75} size={9.300}>Background image</Text></PropName>
          <Select><Text size={9.300} w={22} lh={16}>None</Text><SelectChevron><Chevron w={9} h={6} c="#222" sw={1.300} /></SelectChevron></Select>
        </PropRow>
        <PropRow><PropName><Text w={60} size={9.300}>Image position</Text></PropName>
          <Select><ImageIcon w={9} h={7} /><Text size={9.300} w={10}>Fit</Text><SelectChevron><Chevron w={9} h={6} c="#222" sw={1.300} /></SelectChevron></Select>
        </PropRow>
      </PropsBody>
    </Properties>
  );
}

/* ---------- taskbar ---------- */
const Taskbar = styled.footer`
  display: flex; height: 32px; flex: none; background: linear-gradient(90deg, #cde6ec, #cfe4ee 50%, #d2e0ee 65%, #d5def0 72%, #d3deec 84%, #d5dcec);
`;
const TaskItem = styled.div`
  display: flex; align-items: center; justify-content: center; flex: none; height: 32px;
  width: ${(p) => p.$w || 37}px; padding: 0 1px 2px 0; position: relative;
  ${(p) => p.$active && `background: #eef6fa;`}
  ${(p) => (p.$active || p.$running) && `&::after { content: ""; position: absolute; bottom: 2px; height: 2px; background: #ffb300; left: ${p.$active ? 0 : 4}px; right: ${p.$active ? 0 : 5}px; }`}
`;
const Clock = styled.div`
  display: flex; flex-direction: column; align-items: center; width: 61px; height: 32px; flex: none;
`;

function WindowsTaskbar() {
  return (
    <Taskbar>
      <TaskItem $w={37}><Icon s={16} c="none"><path d="M0 2.300l6.500-1v6.200H0zM7.500 1.100L16 0v7.500H7.500zM0 8.500h6.500v6.200L0 13.700zM7.500 8.500H16V16l-8.500-1.200z" fill="#0b0b0b" /></Icon></TaskItem>
      <TaskItem $w={36}><Icon s={16} c="#111" sw={1.300}><circle cx="10.500" cy="5.500" r="5" /><path d="M7 9l-6.500 6.500" /></Icon></TaskItem>
      <TaskItem $w={36}><Icon s={16} c="#0b0b0b" sw={2}><circle cx="8" cy="8" r="6.800" /></Icon></TaskItem>
      <TaskItem $w={35}><Icon s={16} c="#0b0b0b" sw={1.200}><path d="M.7 0v3h9.600V0M.7 5h9.600v6H.7zM.7 16v-3h9.600v3M14.300 0v3M14.300 8v8" /><path d="M12.500 4.500h3.500v3h-3.500z" fill="#0b0b0b" stroke="none" /></Icon></TaskItem>
      <TaskItem $w={17}><Icon w={4} h={16} c="#0b0b0b"><path d="M.5 0v16M3.500 0v16" /></Icon></TaskItem>
      <Cell $w={6} />
      <TaskItem><Icon s={16} c="none"><path d="M2 12h11l2.500 4H-.500z" fill="#e87910" /><path d="M6.500 0h2l4 12.500q-5 2.500-10 0z" fill="#f58c18" /><path d="M5.700 3h3.700l.8 2.500H4.900zM4 8h7l.8 3H3z" fill="#ece9e5" /></Icon></TaskItem>
      <TaskItem $running><Icon s={16} c="none"><circle cx="8" cy="8" r="8" fill="#147ccf" /><path d="M.2 7C1 2 5-.5 9 .1c5 .8 7.500 5 6.800 8C15 11 10 11 9.700 9.300 11 5 4 3.500.2 7z" fill="#35c5ad" /><path d="M11 .7c4 1.200 5.500 5 4.800 7.600C15 11 10 11 9.700 9.300L11 7z" fill="#6bd15c" /><path d="M6 7c-3 4 1 9 7 7.200-4 3-11 2-12-4C1.500 7 4 6 6 7z" fill="#11559f" /><path d="M7 7.500c-2.500 4 2.500 6.500 7.500 4.500-1 2-7 2-8.500-1C5.500 9 6 8 7 7.500z" fill="#e9f6fa" /></Icon></TaskItem>
      <TaskItem><Letter ch="X" bg="#1c8a50" dark="#0f6537" light="#35c481" /></TaskItem>
      <TaskItem $active><Icon s={14} vb="0 0 16 16" c="none"><circle cx="8" cy="8" r="8" fill="#34a853" /><path d="M8 8L1.100 4A8 8 0 0 1 15 4z" fill="#e33e2c" /><path d="M8 8l7-4a8 8 0 0 1-7.500 12z" fill="#fbc116" /><path d="M1.100 4L5 11l3-3z" fill="#34a853" /><path d="M8 4h7" stroke="#e33e2c" /><circle cx="8" cy="8" r="4" fill="#fff" /><circle cx="8" cy="8" r="3" fill="#4285f4" /></Icon></TaskItem>
      <TaskItem><Letter ch="P" bg="#d4502f" dark="#b83b1d" light="#f38b6b" /></TaskItem>
      <TaskItem><Letter ch="W" bg="#1d5cbe" dark="#1646a0" light="#41a5ee" /></TaskItem>
      <TaskItem><Icon s={16} c="none"><path d="M8 0a8 8 0 1 0 .01 0M8 2.500c4.500 0 4.500 11 0 11s-4.500-11 0-11" fill="#e9152d" fillRule="evenodd" /></Icon></TaskItem>
      <TaskItem><Icon s={16} c="none"><ellipse cx="8" cy="6" rx="7" ry="4.500" transform="rotate(-15 8 6)" fill="#eef0f3" stroke="#d84b50" /><path d="M3 10l9-6M5 4l6 5" stroke="#c55" /><path d="M8 8l5 4M12 7l-2 7" stroke="#1677bd" /><circle cx="14" cy="12" r="1.500" stroke="#1677bd" strokeWidth="1.300" /><circle cx="9.500" cy="14" r="1.500" stroke="#1677bd" strokeWidth="1.300" /></Icon></TaskItem>
      <TaskItem $running><Icon w={16} h={14} c="none"><path d="M0 0h7l1.500 2H16v12H0z" fill="#f9c94f" /><path d="M0 0h7l1.500 2.500H0z" fill="#dc9b10" /><path d="M3 14V9q0-1.500 1.500-1.500h7Q13 7.500 13 9v5h-3v-3H6v3z" fill="#318fdc" /></Icon></TaskItem>
      <TaskItem><Icon s={16} c="none"><circle cx="8" cy="8.500" r="7.500" fill="#ff653b" /><path d="M8 1q7 1 7.500 8-1 6-8 7Q1 15 1 9q5 5 9 2 3-4-2-10z" fill="#ff3d5a" /><path d="M10 0q7 3 5.500 10-1 4-4 5 3-6-1.500-9z" fill="#ffca2c" /><circle cx="8" cy="8.500" r="3.600" fill="#6a3ed0" /><path d="M3 3l4 2-2 2 3 1-3 2-3-3z" fill="#ffb52b" /></Icon></TaskItem>
      <TaskItem><Icon s={16} c="none"><path d="M0 16l1-4A8 8 0 1 1 4 15z" fill="#fff" /><circle cx="8" cy="8" r="6.700" fill="#13c13f" /><path d="M5 4.500q1-1 1.700 1l-.5 1.300q1 2 3 2.700l1-1q2 .5 1.500 1.700-1.500 2.500-5 0Q3.500 7 5 4.500z" fill="#fff" /></Icon></TaskItem>
      <TaskItem><Icon w={16} h={12} c="none"><rect width="16" height="12" rx="3" fill="#cf0a20" /><path d="M0 7h16v2q0 3-3 3H3q-3 0-3-3z" fill="#a00a3e" /><path d="M8 2v6M5.500 6L8 8.800 10.500 6" stroke="#fff" strokeWidth="1.600" /></Icon></TaskItem>
      <TaskItem><Icon s={16} c="none"><path d="M.5 4h15v12H.5z" fill="#323232" /><path d="M4.500 4V1h7v3" stroke="#282828" strokeWidth="1.600" /><path d="M4.500 7h3v3h-3z" fill="#f35325" /><path d="M8.500 7h3v3h-3z" fill="#81bc06" /><path d="M4.500 11h3v3h-3z" fill="#05a6f0" /><path d="M8.500 11h3v3h-3z" fill="#ffba08" /></Icon></TaskItem>
      <TaskItem><Icon s={16} c="none"><rect width="16" height="16" rx="5" fill="#4a8cff" /><rect x="3" y="5.300" width="6.500" height="5.500" rx="1.200" fill="#fff" /><path d="M10 7.500l3-2v5l-3-2z" fill="#fff" /></Icon></TaskItem>
      <TaskItem><Icon s={14} c="none"><circle cx="7" cy="7" r="7" fill="#2098d1" /><path d="M2.500 7l8.500-3.700-1.500 7.500-2.500-2-1.300 1.400-.5-2.500z" fill="#fff" /></Icon></TaskItem>
      <TaskItem><Icon w={10} h={16} c="none"><path d="M0 0h10v16H0z" fill="#0b73c9" /><path d="M0 0h10v2.500H0z" fill="#62d8f7" /><path d="M0 2.500h10V7H0z" fill="#34c0ef" /><path d="M0 7h10v4H0z" fill="#1599df" /><path d="M0 13.500h10V16H0z" fill="#0a4f96" /></Icon></TaskItem>
      <TaskItem><MeetIcon pale /></TaskItem>
      <TaskItem><Icon s={16} c="none"><path d="M0 0h16v16H0z" fill="#4a1850" /><path d="M6.500 3L2 8l4.500 5L10 8z" fill="#a8368f" /><path d="M9 3.500L13.500 8 9 12.500 6.500 10l2-2-2-2z" fill="#df91c7" /></Icon></TaskItem>
      <TaskItem $running><Icon s={14} c="none"><path d="M0 0h14v14H0z" fill="#24a6e8" /><path d="M8 8l3-2 3 3v5H8z" fill="#3c6bc8" /><path d="M0 9l5-4 8 9H0z" fill="#0d4e98" /><path d="M9.500 1v3M8 2.500h3" stroke="#fff" strokeWidth="1.300" /></Icon></TaskItem>
      <Spacer />
      <Cell $w={36} $center><Icon w={21} h={18} c="none"><circle cx="9" cy="8.500" r="9" fill="#fff" /><circle cx="9" cy="8.500" r="7.700" fill="#118fce" /><path d="M6 6c0-4 6.500-4 6.500 0 0 2.500-3.300 2.200-3.300 4.500M9.200 12v2" stroke="#fff" strokeWidth="2" /><circle cx="16.500" cy="13.500" r="4.600" fill="#e81123" /><path d="M16.500 10.500v4M16.500 15.200v1.200" stroke="#fff" strokeWidth="1.300" /></Icon></Cell>
      <Cell $w={34} $center><Icon s={15} c="#111" sw={1.200}><circle cx="10.500" cy="3" r="2.500" /><path d="M7.500 8.500q3-6 7 .5" /><circle cx="4.500" cy="7.500" r="2.500" /><path d="M.5 14.500q1-8 7.500 0" /></Icon></Cell>
      <Cell $w={26} $center><Icon w={12} h={7} c="#222" sw={1.200}><path d="M.5 6.500L6 1l5.500 5.500" /></Icon></Cell>
      <Cell $w={23} $center><Icon s={16} c="none"><circle cx="9" cy="3" r="2.500" fill="#6b70ce" /><circle cx="14" cy="3" r="2" fill="#6b70ce" /><path d="M6 6h10v5q-2 5-7 4z" fill="#5b61c4" /><path d="M0 3.500h8.500v9H0z" fill="#4048ad" /><path d="M2 5.500h5M4.500 5.500V11" stroke="#fff" strokeWidth="1.300" /><circle cx="12.500" cy="12" r="4" fill="#84bd42" /><path d="M10.700 12l1.300 1.300 2.500-2.500" stroke="#fff" /></Icon></Cell>
      <Cell $w={24} $center><Icon w={12} h={16} c="#111" sw={1.200}><rect x=".6" y="4" width="7.500" height="8" rx="1" /><path d="M8 7l3-1.500v5L8 9M1 1.500q5-2.500 9 0M1 14.500q5 2.500 9 0" /></Icon></Cell>
      <Cell $w={25} $center><Icon w={13} h={13} c="#222" sw={1.200}><path d="M0 12Q1 2 12 .7M3 12.500Q4 5 12 4M6.500 12.500Q7 8 12 7.500M10 12.500L12 10.500" /><circle cx="11" cy="11.500" r="1.200" fill="#111" stroke="none" /></Icon></Cell>
      <Cell $w={22} $center><Icon w={15} h={9} c="#111"><path d="M.5.500h12v8H.5zM13 3h1.500v3H13" /><path d="M2 2h5v5H2z" fill="#111" stroke="none" /></Icon></Cell>
      <Cell $w={26} $center><Icon w={16} h={13} c="#111"><path d="M.5 4.500h2L6 1v11L2.500 8.500h-2zM8 4.500q1.500 2 0 4M10.500 2.500q3 4 0 8M13 .7q4 5.500 0 11.600" /></Icon></Cell>
      <Cell $w={5} />
      <Cell $w={35}><Text size={11.300} w={23} color="#111">ENG</Text></Cell>
      <Clock><Text size={11.300} w={27} color="#111" lh={15}>15:34</Text><Text size={11.300} w={59} color="#111" lh={17}>22-03-2022</Text></Clock>
      <Cell $w={47} $center><Icon w={16} h={15} c="none"><path d="M0 0h16v12h-6l-2 3-2-3H0z" fill="#0b0b0b" /><path d="M3 3.500h10M3 6h10M3 8.500h7" stroke="#dfe6ef" /></Icon></Cell>
      <Cell $w={6} />
      <Cell $w={4}><VRule $h={32} $c="#9fa7b4" /></Cell>
    </Taskbar>
  );
}

export default function App() {
  return (
    <Page>
      <GlobalStyle />
      <BrowserTop />
      <AppHeader />
      <Workspace>
        <LeftSide />
        <CanvasArea />
        <PropertiesPane />
      </Workspace>
      <WindowsTaskbar />
    </Page>
  );
}
